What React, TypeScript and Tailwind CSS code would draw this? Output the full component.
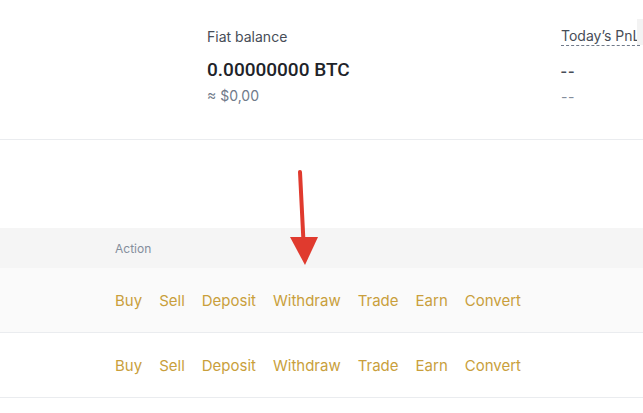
const actions = ['Buy', 'Sell', 'Deposit', 'Withdraw', 'Trade', 'Earn', 'Convert']

const font = { fontFamily: 'Inter, "Noto Sans", sans-serif' }
const numFont = { fontFamily: 'Roboto, Inter, sans-serif' }

function ActionRow({ shaded }: { shaded?: boolean }) {
  return (
    <div
      className={`flex h-[65px] items-center gap-[17px] border-b border-[#eaecef] pl-[115px] pt-[2px] text-[15px] text-[#c99f3c] ${
        shaded ? 'bg-[#fafafa]' : 'bg-white'
      }`}
    >
      {actions.map((a) => (
        <span key={a}>{a}</span>
      ))}
    </div>
  )
}

export default function App() {
  return (
    <div className="relative h-[413px] w-[643px] overflow-hidden bg-white" style={font}>
      <div className="flex h-[140px] border-b border-[#eaecef] pt-[27px]">
        <div className="ml-[207px] flex w-[354px] shrink-0 flex-col">
          <span className="text-[14px] leading-[20px] text-[#474d57]">Fiat balance</span>
          <span
            className="mt-[10px] text-[19px] font-medium leading-[26px] text-[#1e2329]"
            style={numFont}
          >
            0.00000000 BTC
          </span>
          <span className="mt-[3px] text-[14px] leading-[20px] text-[#707a8a]">≈ $0,00</span>
        </div>
        <div className="flex w-[76px] shrink-0 flex-col whitespace-nowrap">
          <span className="self-start border-b border-dashed border-[#707a8a] text-[14px] leading-[18px] text-[#474d57]">
            Today’s PnL
          </span>
          <span className="mt-[12px] text-[20px] leading-[26px] tracking-[2px] text-[#474d57]" style={numFont}>
            --
          </span>
          <span className="mt-[3px] text-[14px] leading-[20px] tracking-[0.5px] text-[#848e9c]">--</span>
        </div>
        <div className="mt-[-8px] h-[26px] w-[6px] shrink-0 bg-[#f3f3f3]" />
      </div>
      <div className="h-[88px]" />
      <div className="flex h-[40px] items-center bg-[#f5f5f5] pl-[115px] pt-[2px] text-[12px] text-[#848e9c]">
        Action
      </div>
      <ActionRow shaded />
      <ActionRow />
      <svg className="absolute left-0 top-0" width="643" height="413" viewBox="0 0 643 413">
        <line x1="300" y1="172" x2="303.5" y2="242" stroke="#e03a2e" strokeWidth="4" strokeLinecap="round" />
        <polygon points="290,237 318,237 305,265" fill="#e03a2e" />
      </svg>
    </div>
  )
}
